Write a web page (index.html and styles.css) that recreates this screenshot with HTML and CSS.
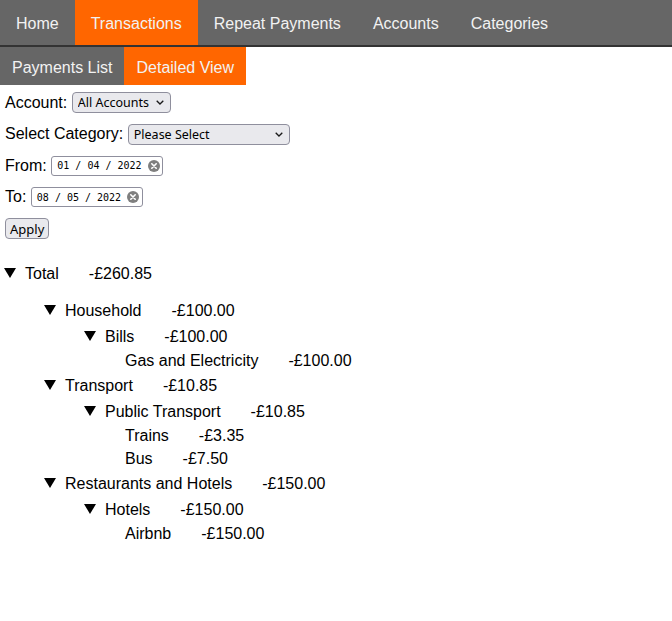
FILE: index.html
```html
<!DOCTYPE html>
<html lang="en">
<head>
<meta charset="utf-8">
<title>Transactions - Detailed View</title>
<link rel="stylesheet" href="styles.css">
</head>
<body>
<nav class="topnav">
  <a class="tab" href="#">Home</a>
  <a class="tab active" href="#">Transactions</a>
  <a class="tab" href="#">Repeat Payments</a>
  <a class="tab" href="#">Accounts</a>
  <a class="tab" href="#">Categories</a>
</nav>
<nav class="subnav">
  <a class="subtab" href="#">Payments List</a>
  <a class="subtab active" href="#">Detailed View</a>
</nav>
<form class="filters">
  <div class="field">
    <label for="account">Account:</label>
    <span class="select-wrap">
      <select id="account" class="select select-account"><option>All Accounts</option></select>
      <svg class="chevron" viewBox="0 0 8 5" width="8" height="5"><polyline points="0.7,0.7 4,4 7.3,0.7" fill="none" stroke="#1a1a1a" stroke-width="1.3"/></svg>
    </span>
  </div>
  <div class="field">
    <label for="category">Select Category:</label>
    <span class="select-wrap">
      <select id="category" class="select select-category"><option>Please Select</option></select>
      <svg class="chevron" viewBox="0 0 8 5" width="8" height="5"><polyline points="0.7,0.7 4,4 7.3,0.7" fill="none" stroke="#1a1a1a" stroke-width="1.3"/></svg>
    </span>
  </div>
  <div class="field">
    <label>From:</label>
    <span class="date-input">
      <span class="date-text">01 / 04 / 2022</span>
      <svg class="clear" viewBox="0 0 12 12" width="12" height="12"><circle cx="6" cy="6" r="6" fill="#7f7f7f"/><path d="M3.8 3.8 L8.2 8.2 M8.2 3.8 L3.8 8.2" stroke="#fff" stroke-width="1.6" stroke-linecap="round"/></svg>
    </span>
  </div>
  <div class="field">
    <label>To:</label>
    <span class="date-input">
      <span class="date-text">08 / 05 / 2022</span>
      <svg class="clear" viewBox="0 0 12 12" width="12" height="12"><circle cx="6" cy="6" r="6" fill="#7f7f7f"/><path d="M3.8 3.8 L8.2 8.2 M8.2 3.8 L3.8 8.2" stroke="#fff" stroke-width="1.6" stroke-linecap="round"/></svg>
    </span>
  </div>
  <div class="field last">
    <button type="button" class="button">Apply</button>
  </div>
</form>

<div class="tree">
  <details open>
    <summary class="row"><svg class="tri" viewBox="0 0 12 10" width="12" height="10"><polygon points="0,0 12,0 6,10" fill="#000"/></svg><span class="name">Total</span><span class="amt">-£260.85</span></summary>
    <div class="children top">
      <details open>
        <summary class="row"><svg class="tri" viewBox="0 0 12 10" width="12" height="10"><polygon points="0,0 12,0 6,10" fill="#000"/></svg><span class="name">Household</span><span class="amt">-£100.00</span></summary>
        <div class="children">
          <details open>
            <summary class="row"><svg class="tri" viewBox="0 0 12 10" width="12" height="10"><polygon points="0,0 12,0 6,10" fill="#000"/></svg><span class="name">Bills</span><span class="amt">-£100.00</span></summary>
            <div class="children">
              <div class="leaf"><span class="name">Gas and Electricity</span><span class="amt">-£100.00</span></div>
            </div>
          </details>
        </div>
      </details>
      <details open>
        <summary class="row"><svg class="tri" viewBox="0 0 12 10" width="12" height="10"><polygon points="0,0 12,0 6,10" fill="#000"/></svg><span class="name">Transport</span><span class="amt">-£10.85</span></summary>
        <div class="children">
          <details open>
            <summary class="row"><svg class="tri" viewBox="0 0 12 10" width="12" height="10"><polygon points="0,0 12,0 6,10" fill="#000"/></svg><span class="name">Public Transport</span><span class="amt">-£10.85</span></summary>
            <div class="children">
              <div class="leaf"><span class="name">Trains</span><span class="amt">-£3.35</span></div>
              <div class="leaf"><span class="name">Bus</span><span class="amt">-£7.50</span></div>
            </div>
          </details>
        </div>
      </details>
      <details open>
        <summary class="row"><svg class="tri" viewBox="0 0 12 10" width="12" height="10"><polygon points="0,0 12,0 6,10" fill="#000"/></svg><span class="name">Restaurants and Hotels</span><span class="amt">-£150.00</span></summary>
        <div class="children">
          <details open>
            <summary class="row"><svg class="tri" viewBox="0 0 12 10" width="12" height="10"><polygon points="0,0 12,0 6,10" fill="#000"/></svg><span class="name">Hotels</span><span class="amt">-£150.00</span></summary>
            <div class="children">
              <div class="leaf"><span class="name">Airbnb</span><span class="amt">-£150.00</span></div>
            </div>
          </details>
        </div>
      </details>
    </div>
  </details>
</div>
</body>
</html>
```

FILE: styles.css
```css
html, body {
  margin: 0;
  padding: 0;
  background: #fff;
  color: #000;
  font-family: "Liberation Sans", Arial, sans-serif;
  font-size: 16px;
}

.topnav {
  display: flex;
  background: #666666;
  border-bottom: 2px solid #333333;
}

.tab {
  display: block;
  padding: 14px 16px 12px;
  line-height: 19px;
  color: #f2f2f2;
  text-decoration: none;
}

.tab.active {
  background: #ff6600;
}

.subnav {
  display: flex;
}

.subtab {
  display: block;
  padding: 12px 12px 8px;
  line-height: 18px;
  color: #f2f2f2;
  background: #666666;
  text-decoration: none;
}

.subtab.active {
  background: #ff6600;
}

.filters {
  margin: 0;
  padding: 7px 5px 0;
}

.field {
  display: flex;
  align-items: center;
  gap: 4.5px;
  height: 21px;
  margin-bottom: 10.5px;
}

.field.last {
  margin-bottom: 0;
}

.select-wrap {
  position: relative;
  display: inline-flex;
}

.select {
  -webkit-appearance: none;
  appearance: none;
  box-sizing: border-box;
  height: 21px;
  margin: 0;
  padding: 0 12px 0 5px;
  border: 1px solid #8f8f9d;
  border-radius: 4px;
  background: #e9e9ed;
  color: #000;
  font-family: "Noto Sans", "Open Sans", sans-serif;
  font-size: 12.5px;
}

.select-account {
  width: 99px;
}

.select-category {
  width: 162px;
}

.chevron {
  position: absolute;
  right: 7px;
  top: 8px;
  pointer-events: none;
}

.date-input {
  display: inline-flex;
  align-items: center;
  gap: 6px;
  box-sizing: border-box;
  width: 112px;
  height: 20px;
  padding: 0 5px;
  border: 1px solid #8f8f9d;
  border-radius: 3px;
  background: #fff;
}

.date-text {
  font-family: "DejaVu Sans Mono", "Liberation Mono", monospace;
  font-size: 10px;
  color: #000;
  white-space: pre;
}

.clear {
  flex: none;
}

.button {
  box-sizing: border-box;
  height: 21px;
  margin: 0;
  padding: 0 4px;
  border: 1px solid #8f8f9d;
  border-radius: 4px;
  background: #e9e9ed;
  color: #000;
  font-family: "Noto Sans", "Open Sans", sans-serif;
  font-size: 13px;
}

.tree {
  margin-top: 21px;
  padding-left: 4px;
}

.tree details {
  margin: 0;
}

.tree summary.row {
  display: block;
  list-style: none;
  padding: 2px 0 1px;
  line-height: 23px;
  cursor: pointer;
}

.tree summary::-webkit-details-marker {
  display: none;
}

.tree summary::marker {
  content: "";
}

.tri {
  width: 12px;
  height: 10px;
  margin-right: 9px;
  vertical-align: 1px;
}

.leaf {
  line-height: 23px;
  padding-left: 1px;
}

.children {
  padding-left: 40px;
}

.children.top {
  margin-top: 11px;
}

.amt {
  margin-left: 30px;
}
```
